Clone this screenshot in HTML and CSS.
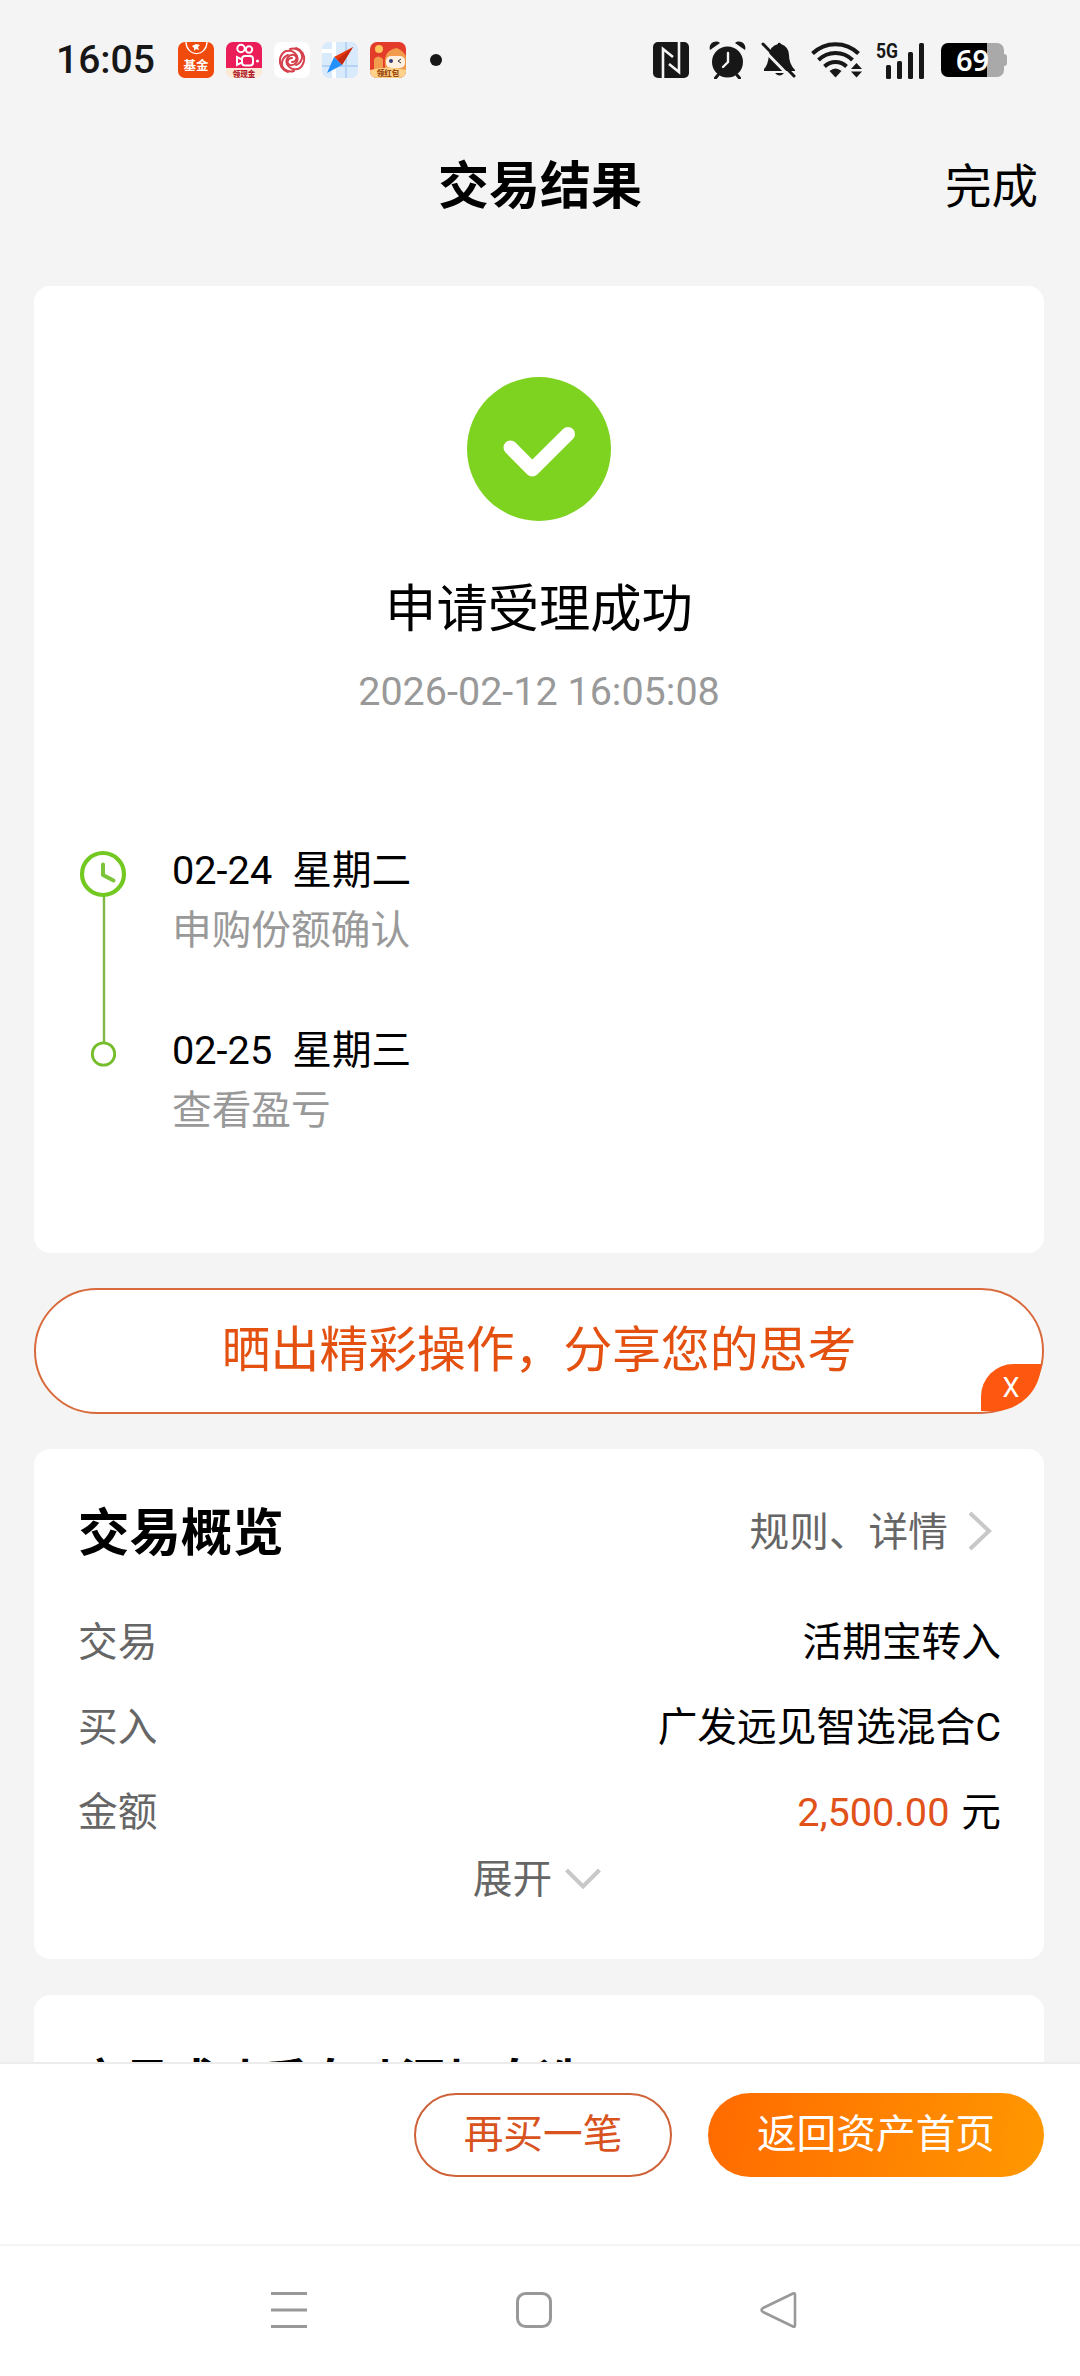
FILE: index.html
```html
<!DOCTYPE html>
<html lang="zh-CN">
<head>
    <meta charset="UTF-8">
    <meta name="viewport" content="width=device-width, initial-scale=1.0">
    <title>交易结果</title>
    <link rel="stylesheet" href="styles.css">
</head>
<body>
    <div class="status-bar">
        <div class="status-left">
            <span class="time">16:05</span>
            <svg class="app-icon" viewBox="0 0 36 36">
                <rect width="36" height="36" rx="7" fill="#f04a0c"/>
                <path d="M8 0a10 11 0 0 0 21 0" fill="none" stroke="#fff" stroke-width="1.3"/>
                <path d="M14 4l4-2 4 1-2 2 1 3-3-1-2 2v-3z" fill="#fff"/>
                <text class="fund-text" x="18" y="28" text-anchor="middle">基金</text>
            </svg>
            <svg class="app-icon" viewBox="0 0 36 36">
                <rect width="36" height="36" rx="7" fill="#fde9d6"/>
                <path d="M0 26V7a7 7 0 0 1 7-7h22a7 7 0 0 1 7 7v19z" fill="#ea1d58"/>
                <g fill="none" stroke="#fff" stroke-width="2">
                    <circle cx="15" cy="6.5" r="3.7"/>
                    <circle cx="23" cy="7.5" r="3.2"/>
                    <rect x="16" y="14" width="11" height="9.5" rx="3"/>
                    <path d="M16 17.5l-5-2.5v8l5-2.5z"/>
                </g>
                <circle cx="31.5" cy="19" r="1.5" fill="#fff"/>
                <text class="cash-text" x="18" y="34.5" text-anchor="middle">领现金</text>
            </svg>
            <svg class="app-icon" viewBox="0 0 36 36">
                <rect width="36" height="36" rx="7" fill="#fff"/>
                <g fill="none" stroke="#d5404c" stroke-width="2" stroke-linecap="round">
                    <path d="M18 20c5 0 6-6 2-7-5-1-9 4-7 9 2 4 6 6 10 5"/>
                    <path d="M18 16c-5 0-6 6-2 7 5 1 9-4 7-9-2-4-6-6-10-5"/>
                    <path d="M16 7c7-2 13 3 12 9-1 4-3 6-6 7"/>
                    <path d="M20 29c-7 2-13-3-12-9 1-4 3-6 6-7"/>
                    <path d="M22 6c6 2 9 7 8 13-1 4-3 7-6 8"/>
                    <path d="M14 30c-6-2-9-7-8-13 1-4 3-7 6-8"/>
                </g>
            </svg>
            <svg class="app-icon" viewBox="0 0 36 36">
                <rect width="36" height="36" rx="7" fill="#d9eafc"/>
                <path d="M12 0v36M0 9h14" stroke="#fff" stroke-width="4"/>
                <path d="M24 0v36M0 24h36" stroke="#b5d3f4" stroke-width="2"/>
                <path d="M31 5L12 15l8 8z" fill="#e8380d"/>
                <path d="M31 5L20 23l-5-5z" fill="#c42a10"/>
                <path d="M5 31l7-16 8 8z" fill="#2490fb"/>
            </svg>
            <svg class="app-icon" viewBox="0 0 36 36">
                <rect width="36" height="36" rx="7" fill="#e43c2b"/>
                <path d="M4 28V17q4-5 9 0v10zM15 24q-2-16 12-18 8 4 9 9v15H15z" fill="#f29b4c"/>
                <circle cx="9" cy="7" r="4" fill="#ffc55c"/>
                <rect x="16" y="14" width="19" height="12" rx="5" fill="#fff0e2"/>
                <circle cx="21" cy="19" r="2" fill="#333d70"/>
                <path d="M31 17l-3 2 3 2" fill="none" stroke="#333" stroke-width="1"/>
                <path d="M0 28q18-5 36 0v1a7 7 0 0 1-7 7H7a7 7 0 0 1-7-7z" fill="#ffd28a"/>
                <text class="cash-text brown" x="18" y="34" text-anchor="middle">领红包</text>
            </svg>
            <span class="more-dot"></span>
        </div>
        <div class="status-right">
            <svg class="nfc" viewBox="0 0 36 36">
                <rect width="36" height="36" rx="5" fill="#171717"/>
                <path d="M10 36V7l10 8M26 0v30l-10-8" fill="none" stroke="#f4f4f4" stroke-width="2.6"/>
            </svg>
            <svg class="alarm" viewBox="0 0 37 38">
                <circle cx="18.5" cy="21" r="15.5" fill="#171717"/>
                <path d="M9 34l-2.5 3M28 34l2.5 3" stroke="#171717" stroke-width="3" stroke-linecap="round"/>
                <path d="M1 9C-1 3 6-2 11 2zM36 9c2-6-5-11-10-7z" fill="#171717"/>
                <path d="M19 12v9l-5 5" fill="none" stroke="#f4f4f4" stroke-width="2.4" stroke-linecap="round"/>
            </svg>
            <svg class="bell" viewBox="0 0 36 36">
                <path d="M17 1q2-1 3 1 8 3 8 11 0 9 6 15v1H3v-2q4-4 5-14Q9 4 17 2z" fill="#171717"/>
                <path d="M14 31h9q-4.5 5-9 0z" fill="#171717"/>
                <path d="M-1 4l32 33" stroke="#f4f4f4" stroke-width="3"/>
                <path d="M2 2l31 32" stroke="#171717" stroke-width="3" stroke-linecap="round"/>
            </svg>
            <svg class="wifi" viewBox="0 0 52 36">
                <g fill="none" stroke="#171717" stroke-width="4">
                    <path d="M1.5 11.5a33 33 0 0 1 46 0"/>
                    <path d="M7.5 18a24 24 0 0 1 34 0"/>
                    <path d="M13.5 24.5a16 16 0 0 1 22 0"/>
                </g>
                <path d="M18.5 29q6-5 12 0l-6 6.5z" fill="#171717"/>
                <path d="M40 27l5.5-6 5.5 6zM40 29.5h11l-5.5 6z" fill="#171717"/>
            </svg>
            <svg class="signal" viewBox="0 0 49 37">
                <text class="net-text" x="0" y="15.5" textLength="22" lengthAdjust="spacingAndGlyphs">5G</text>
                <rect x="10" y="23" width="5" height="14" rx="1.5" fill="#171717"/>
                <rect x="21" y="19" width="5" height="18" rx="1.5" fill="#171717"/>
                <rect x="32" y="10" width="5" height="27" rx="1.5" fill="#171717"/>
                <rect x="43" y="1" width="5" height="36" rx="1.5" fill="#171717"/>
            </svg>
            <svg class="battery" viewBox="0 0 67 34">
                <path d="M46 0h10a7 7 0 0 1 7 7v4q3 0 3 3v6q0 3-3 3v4a7 7 0 0 1-7 7H46z" fill="#a9a9a9"/>
                <path d="M7 0h39v34H7a7 7 0 0 1-7-7V7a7 7 0 0 1 7-7z" fill="#000"/>
                <text class="battery-text" x="15" y="27.5">69</text>
            </svg>
        </div>
    </div>

    <div class="header">
        <span></span>
        <div class="header-title">交易结果</div>
        <div class="header-done">完成</div>
    </div>

    <div class="content">
        <div class="card result">
            <svg class="check" viewBox="0 0 144 144">
                <circle cx="72" cy="72" r="72" fill="#7ed321"/>
                <path d="M43.5 70.5l21.8 22L101 57" fill="none" stroke="#fff" stroke-width="14" stroke-linecap="round" stroke-linejoin="round"/>
            </svg>
            <div class="result-title">申请受理成功</div>
            <div class="result-time">2026-02-12 16:05:08</div>
            <div class="timeline">
                <svg class="timeline-line" viewBox="0 0 48 220">
                    <path d="M25 44v148" stroke="#7fb843" stroke-width="2.4"/>
                    <circle cx="24" cy="24" r="21" fill="#fff" stroke="#73c921" stroke-width="4.2"/>
                    <path d="M24 14.5V25l10.5 5.5" fill="none" stroke="#7cc53a" stroke-width="4" stroke-linecap="round" stroke-linejoin="round"/>
                    <circle cx="24.5" cy="204" r="11.2" fill="#fff" stroke="#76bd2c" stroke-width="2.8"/>
                </svg>
                <div class="steps">
                    <div class="step">
                        <div class="step-date"><span>02-24</span><span>星期二</span></div>
                        <div class="step-desc">申购份额确认</div>
                    </div>
                    <div class="step">
                        <div class="step-date"><span>02-25</span><span>星期三</span></div>
                        <div class="step-desc">查看盈亏</div>
                    </div>
                </div>
            </div>
        </div>

        <div class="share">
            晒出精彩操作，分享您的思考
            <div class="share-close">X</div>
        </div>

        <div class="card overview">
            <div class="overview-head">
                <div class="overview-title">交易概览</div>
                <div class="overview-link">
                    <span>规则、详情</span>
                    <svg class="chevron-right" viewBox="0 0 24 40">
                        <path d="M2 2l19 18L2 38" fill="none" stroke="#c8c8c8" stroke-width="4"/>
                    </svg>
                </div>
            </div>
            <div class="row"><span class="label">交易</span><span>活期宝转入</span></div>
            <div class="row"><span class="label">买入</span><span>广发远见智选混合C</span></div>
            <div class="row"><span class="label">金额</span><span><span class="amount">2,500.00</span> 元</span></div>
            <div class="expand">
                <span>展开</span>
                <svg class="chevron-down" viewBox="0 0 36 22">
                    <path d="M1.5 2L18 18.5 34.5 2" fill="none" stroke="#c8c8c8" stroke-width="4"/>
                </svg>
            </div>
        </div>

        <div class="card auto-add">
            <div class="auto-title">交易成功后自动添加自选</div>
        </div>
    </div>

    <div class="footer">
        <button class="button button-outline">再买一笔</button>
        <button class="button button-orange">返回资产首页</button>
    </div>

    <div class="nav-bar">
        <svg class="nav-icon" viewBox="0 0 40 40">
            <path d="M2 3.5h36M2 20h36M2 36.5h36" stroke="#999" stroke-width="3"/>
        </svg>
        <svg class="nav-icon" viewBox="0 0 40 40">
            <rect x="3.5" y="3.5" width="33" height="33" rx="8" fill="none" stroke="#999" stroke-width="3"/>
        </svg>
        <svg class="nav-icon" viewBox="0 0 40 40">
            <path d="M34 3.5q2-1 2 1.5v30q0 2.5-2 1.5L4 22q-3-2 0-4z" fill="none" stroke="#999" stroke-width="2.6" stroke-linejoin="round"/>
        </svg>
    </div>
</body>
</html>
```
FILE: styles.css
```css
* {
    box-sizing: border-box;
}

body {
    display: flex;
    flex-direction: column;
    width: 1080px;
    height: 2376px;
    margin: 0;
    background-color: #f4f4f4;
    color: #000;
    font-family: Roboto, 'Noto Sans CJK SC', sans-serif;
    font-size: 39.7px;
    overflow: hidden;
}

svg {
    display: block;
    flex: none;
}

/* status bar */
.status-bar {
    display: flex;
    justify-content: space-between;
    height: 120px;
    padding: 0 72px 0 56px;
    flex: none;
}

.status-left,
.status-right {
    display: flex;
    align-items: center;
    height: 120px;
}

.time {
    width: 110px;
    margin-right: 12px;
    font-size: 39px;
    font-weight: 500;
    line-height: 118px;
    color: #171717;
}

.app-icon {
    width: 36px;
    height: 36px;
    margin-right: 12px;
}

.fund-text {
    font-size: 12.5px;
    font-weight: 700;
    fill: #fff;
}

.cash-text {
    font-size: 7.5px;
    font-weight: 900;
    fill: #b01c2c;
}

.brown {
    fill: #9c4a10;
}

.more-dot {
    width: 12px;
    height: 12px;
    margin-left: 12px;
    border-radius: 50%;
    background-color: #171717;
}

.nfc {
    width: 36px;
    height: 36px;
    margin-right: 20px;
}

.alarm {
    width: 37px;
    height: 38px;
    margin-right: 15px;
}

.bell {
    width: 36px;
    height: 36px;
    margin-right: 14px;
}

.wifi {
    width: 52px;
    height: 36px;
    margin-right: 13px;
}

.signal {
    width: 49px;
    height: 37px;
    margin-right: 16px;
    overflow: visible;
}

.net-text {
    font-size: 21px;
    font-weight: 700;
    fill: #171717;
}

.battery {
    width: 67px;
    height: 34px;
    overflow: visible;
}

.battery-text {
    font-family: 'Noto Sans', sans-serif;
    font-size: 29px;
    font-weight: 600;
    fill: #fff;
}

/* page header */
.header {
    display: grid;
    grid-template-columns: 1fr auto 1fr;
    align-items: center;
    height: 133px;
    padding: 0 42px;
    flex: none;
}

.header-title {
    font-size: 51px;
    font-weight: 700;
    line-height: 60px;
}

.header-done {
    font-size: 46.5px;
    line-height: 60px;
    text-align: right;
}

.content {
    display: flex;
    flex-direction: column;
    gap: 35px;
    height: 1809px;
    padding: 33px 36px 0 34px;
    overflow: hidden;
    flex: none;
}

.card {
    border-radius: 16px;
    background-color: #fff;
    flex: none;
}

/* result card */
.result {
    display: flex;
    flex-direction: column;
    align-items: center;
    height: 967px;
    padding-top: 91px;
}

.check {
    width: 144px;
    height: 144px;
}

.result-title {
    margin-top: 59px;
    font-size: 51.3px;
    line-height: 60px;
}

.result-time {
    margin-top: 27px;
    font-size: 39.5px;
    line-height: 50px;
    color: #999;
}

.timeline {
    display: flex;
    align-self: stretch;
    margin-top: 124px;
    padding-left: 45px;
}

.timeline-line {
    width: 48px;
    height: 220px;
    margin-top: 9px;
}

.steps {
    display: flex;
    flex-direction: column;
    gap: 60px;
    margin-left: 45px;
}

.step-date,
.step-desc {
    line-height: 60px;
}

.step-date {
    display: flex;
    gap: 20px;
}

.step-desc {
    color: #999;
}

/* share banner */
.share {
    position: relative;
    height: 126px;
    border: 2px solid #d96a3c;
    border-radius: 63px;
    background-color: #fff;
    color: #e4500f;
    font-size: 48.8px;
    line-height: 122px;
    text-align: center;
    flex: none;
}

.share-close {
    position: absolute;
    right: 1px;
    bottom: 1px;
    width: 60px;
    height: 47px;
    border-radius: 40px 0 58px 0;
    background-color: #fd5710;
    color: #fff;
    font-size: 27px;
    line-height: 48px;
}

/* overview card */
.overview {
    height: 510px;
    padding: 36px 43px 0 44px;
}

.overview-head {
    display: flex;
    justify-content: space-between;
    align-items: center;
    height: 86px;
    margin-bottom: 29px;
}

.overview-title {
    font-size: 51.4px;
    font-weight: 700;
}

.overview-link {
    display: flex;
    align-items: center;
    gap: 20px;
    padding-right: 9px;
    color: #666;
}

.chevron-right {
    width: 24px;
    height: 40px;
    margin-top: 6px;
}

.row {
    display: flex;
    justify-content: space-between;
    height: 85px;
    line-height: 85px;
}

.label {
    color: #666;
}

.amount {
    margin-right: 2px;
    color: #e1511a;
}

.expand {
    display: flex;
    justify-content: center;
    align-items: center;
    gap: 13px;
    height: 40px;
    padding-right: 5px;
    color: #666;
}

.chevron-down {
    width: 36px;
    height: 22px;
    margin-top: 8px;
}

/* next card, cut off by the footer */
.auto-add {
    height: 300px;
    margin-top: 1px;
    padding: 56px 44px 0;
}

.auto-title {
    font-size: 46px;
    font-weight: 700;
    line-height: 60px;
}

/* bottom buttons */
.footer {
    display: flex;
    justify-content: flex-end;
    gap: 36px;
    height: 182px;
    padding: 29px 36px 0;
    border-top: 2px solid #ececec;
    background-color: #fff;
    flex: none;
}

.button {
    height: 84px;
    padding: 0;
    border: none;
    border-radius: 42px;
    font-family: inherit;
    font-size: 39.7px;
    line-height: 78px;
}

.button-outline {
    width: 258px;
    border: 2px solid #cf6238;
    background-color: #fff;
    color: #d9531e;
}

.button-orange {
    width: 336px;
    background: linear-gradient(100deg, #ff6a00, #ff9800);
    color: #fff;
}

/* system navigation */
.nav-bar {
    display: flex;
    justify-content: center;
    gap: 205px;
    height: 132px;
    padding: 44px 12px 0 0;
    border-top: 2px solid #f4f4f4;
    background-color: #fff;
    flex: none;
}

.nav-icon {
    width: 40px;
    height: 40px;
}
```
